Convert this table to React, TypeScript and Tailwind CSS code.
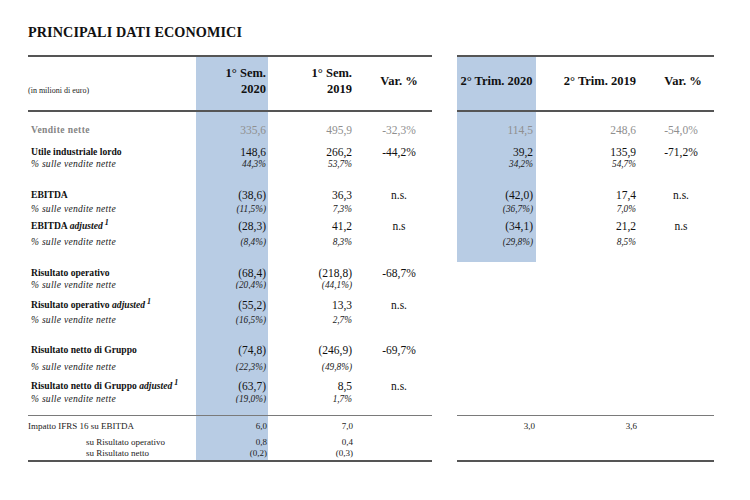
import type { ReactNode } from "react";

type Kind = "space" | "sales" | "main" | "pct";

type Row = {
  h: string;
  kind: Kind;
  label?: ReactNode;
  left?: string[];
  right?: string[];
  rb?: boolean; // blue column still running in the quarter table
};

function Adj({ children }: { children: ReactNode }) {
  return (
    <>
      {children} <i>adjusted</i>
      <sup className="text-[8px] italic font-bold ml-[2px]">1</sup>
    </>
  );
}

const PCT = "% sulle vendite nette";

const ROWS: Row[] = [
  { h: "h-[9px]", kind: "space", rb: true },
  { h: "h-[18px]", kind: "sales", label: "Vendite nette", left: ["335,6", "495,9", "-32,3%"], right: ["114,5", "248,6", "-54,0%"], rb: true },
  { h: "h-[6px]", kind: "space", rb: true },
  { h: "h-[14px]", kind: "main", label: "Utile industriale lordo", left: ["148,6", "266,2", "-44,2%"], right: ["39,2", "135,9", "-71,2%"], rb: true },
  { h: "h-[10px]", kind: "pct", label: PCT, left: ["44,3%", "53,7%"], right: ["34,2%", "54,7%"], rb: true },
  { h: "h-[18px]", kind: "space", rb: true },
  { h: "h-[16px]", kind: "main", label: "EBITDA", left: ["(38,6)", "36,3", "n.s."], right: ["(42,0)", "17,4", "n.s."], rb: true },
  { h: "h-[12px]", kind: "pct", label: PCT, left: ["(11,5%)", "7,3%"], right: ["(36,7%)", "7,0%"], rb: true },
  { h: "h-[22px]", kind: "main", label: <Adj>EBITDA</Adj>, left: ["(28,3)", "41,2", "n.s"], right: ["(34,1)", "21,2", "n.s"], rb: true },
  { h: "h-[10px]", kind: "pct", label: PCT, left: ["(8,4%)", "8,3%"], right: ["(29,8%)", "8,5%"], rb: true },
  { h: "h-[15px]", kind: "space", rb: true },
  { h: "h-[3px]", kind: "space" },
  { h: "h-[16px]", kind: "main", label: "Risultato operativo", left: ["(68,4)", "(218,8)", "-68,7%"] },
  { h: "h-[8px]", kind: "pct", label: PCT, left: ["(20,4%)", "(44,1%)"] },
  { h: "h-[8px]", kind: "space" },
  { h: "h-[16px]", kind: "main", label: <Adj>Risultato operativo</Adj>, left: ["(55,2)", "13,3", "n.s."] },
  { h: "h-[14px]", kind: "pct", label: PCT, left: ["(16,5%)", "2,7%"] },
  { h: "h-[16px]", kind: "space" },
  { h: "h-[14px]", kind: "main", label: "Risultato netto di Gruppo", left: ["(74,8)", "(246,9)", "-69,7%"] },
  { h: "h-[20px]", kind: "pct", label: PCT, left: ["(22,3%)", "(49,8%)"] },
  { h: "h-[18px]", kind: "main", label: <Adj>Risultato netto di Gruppo</Adj>, left: ["(63,7)", "8,5", "n.s."] },
  { h: "h-[8px]", kind: "pct", label: PCT, left: ["(19,0%)", "1,7%"] },
  { h: "h-[12px]", kind: "space" },
];

const IFRS = [
  { h: "h-[21px]", label: "Impatto IFRS 16 su EBITDA", indent: false, left: ["6,0", "7,0"], right: ["3,0", "3,6"] },
  { h: "h-[10px]", label: "su Risultato operativo", indent: true, left: ["0,8", "0,4"], right: ["", ""] },
  { h: "h-[13px]", label: "su Risultato netto", indent: true, left: ["(0,2)", "(0,3)"], right: ["", ""] },
];

const BLUE = "bg-[#b8cce4]";

function valueClass(kind: Kind) {
  if (kind === "sales") return "text-[11.5px] leading-[14px] text-[#8f8f8f]";
  if (kind === "pct") return "text-[9.3px] leading-[12px] italic text-[#222]";
  return "text-[11.5px] leading-[14px] text-[#111]";
}

function Label({ row }: { row: Row }) {
  if (row.kind === "sales")
    return <span className="font-bold text-[9.6px] leading-[12px] tracking-[0.4px] text-[#858585]">{row.label}</span>;
  if (row.kind === "pct")
    return <span className="italic text-[9.6px] leading-[12px] tracking-[0.25px] text-[#1a1a1a]">{row.label}</span>;
  return <span className="font-bold text-[9.6px] leading-[12px] text-[#111]">{row.label}</span>;
}

function LeftTable() {
  return (
    <div className="w-[404px] border-t-2 border-[#555]">
      <div className="flex h-[53px]">
        <div className="w-[168px] flex items-end pb-[14px] text-[8px] leading-[10px] text-[#222]">(in milioni di euro)</div>
        <div className={`w-[72px] ${BLUE} flex items-center justify-end pr-[2px] pb-[5px]`}>
          <span className="block text-right font-bold text-[12.5px] leading-[16px]">1° Sem.<br />2020</span>
        </div>
        <div className="w-[98px] flex items-center justify-end pr-[14px] pb-[5px]">
          <span className="block text-right font-bold text-[12.5px] leading-[16px]">1° Sem.<br />2019</span>
        </div>
        <div className="w-[66px] flex items-center justify-center pb-[5px] font-bold text-[12.5px] leading-[16px]">Var. %</div>
      </div>
      <div className="h-[2px] bg-[#555]" />
      {ROWS.map((row, i) => (
        <div key={i} className={`flex ${row.h}`}>
          <div className="w-[168px] flex items-center pl-[3px] whitespace-nowrap">
            {row.label && <Label row={row} />}
          </div>
          <div className={`w-[72px] ${BLUE} flex items-center justify-end pr-[2px] ${valueClass(row.kind)}`}>{row.left?.[0]}</div>
          <div className={`w-[98px] flex items-center justify-end pr-[14px] ${valueClass(row.kind)}`}>{row.left?.[1]}</div>
          <div className={`w-[66px] flex items-center justify-center ${valueClass(row.kind)}`}>{row.left?.[2]}</div>
        </div>
      ))}
      <div className="h-px bg-[#7a7a7a]" />
      {IFRS.map((r, i) => (
        <div key={i} className={`flex ${r.h} text-[9px] leading-[11px] text-[#222]`}>
          <div className={`w-[168px] flex items-center whitespace-nowrap ${r.indent ? "pl-[58px]" : ""}`}>{r.label}</div>
          <div className={`w-[72px] ${BLUE} flex items-center justify-end pr-[1px]`}>{r.left[0]}</div>
          <div className="w-[98px] flex items-center justify-end pr-[13px]">{r.left[1]}</div>
          <div className="w-[66px]" />
        </div>
      ))}
      <div className="h-[2px] bg-[#555]" />
    </div>
  );
}

function RightTable() {
  return (
    <div className="w-[257px] border-t-2 border-[#555]">
      <div className="flex h-[53px] font-bold text-[12.5px] leading-[16px] whitespace-nowrap">
        <div className={`w-[79px] ${BLUE} flex items-center justify-center pb-[5px]`}>2° Trim. 2020</div>
        <div className="w-[112px] flex items-center justify-end pr-[12px] pb-[5px]">2° Trim. 2019</div>
        <div className="w-[66px] flex items-center justify-center pb-[5px] pl-[4px]">Var. %</div>
      </div>
      <div className="h-[2px] bg-[#555]" />
      {ROWS.map((row, i) => (
        <div key={i} className={`flex ${row.h}`}>
          <div className={`w-[79px] ${row.rb ? BLUE : ""} flex items-center justify-end pr-[3px] ${valueClass(row.kind)}`}>{row.right?.[0]}</div>
          <div className={`w-[112px] flex items-center justify-end pr-[12px] ${valueClass(row.kind)}`}>{row.right?.[1]}</div>
          <div className={`w-[66px] flex items-center justify-center ${valueClass(row.kind)}`}>{row.right?.[2]}</div>
        </div>
      ))}
      <div className="h-px bg-[#7a7a7a]" />
      {IFRS.map((r, i) => (
        <div key={i} className={`flex ${r.h} text-[9px] leading-[11px] text-[#222]`}>
          <div className="w-[79px] flex items-center justify-end pr-[1px]">{r.right[0]}</div>
          <div className="w-[112px] flex items-center justify-end pr-[11px]">{r.right[1]}</div>
          <div className="w-[66px]" />
        </div>
      ))}
      <div className="h-[2px] bg-[#555]" />
    </div>
  );
}

export default function App() {
  return (
    <div className="w-[750px] h-[500px] bg-white pl-[28px] pt-[24px] font-['Liberation_Serif','Times_New_Roman',serif] text-[#111]">
      <h1 className="text-[14.2px] leading-[16px] font-bold tracking-[0.1px]">PRINCIPALI DATI ECONOMICI</h1>
      <div className="mt-[15px] flex gap-[25px]">
        <LeftTable />
        <RightTable />
      </div>
    </div>
  );
}
